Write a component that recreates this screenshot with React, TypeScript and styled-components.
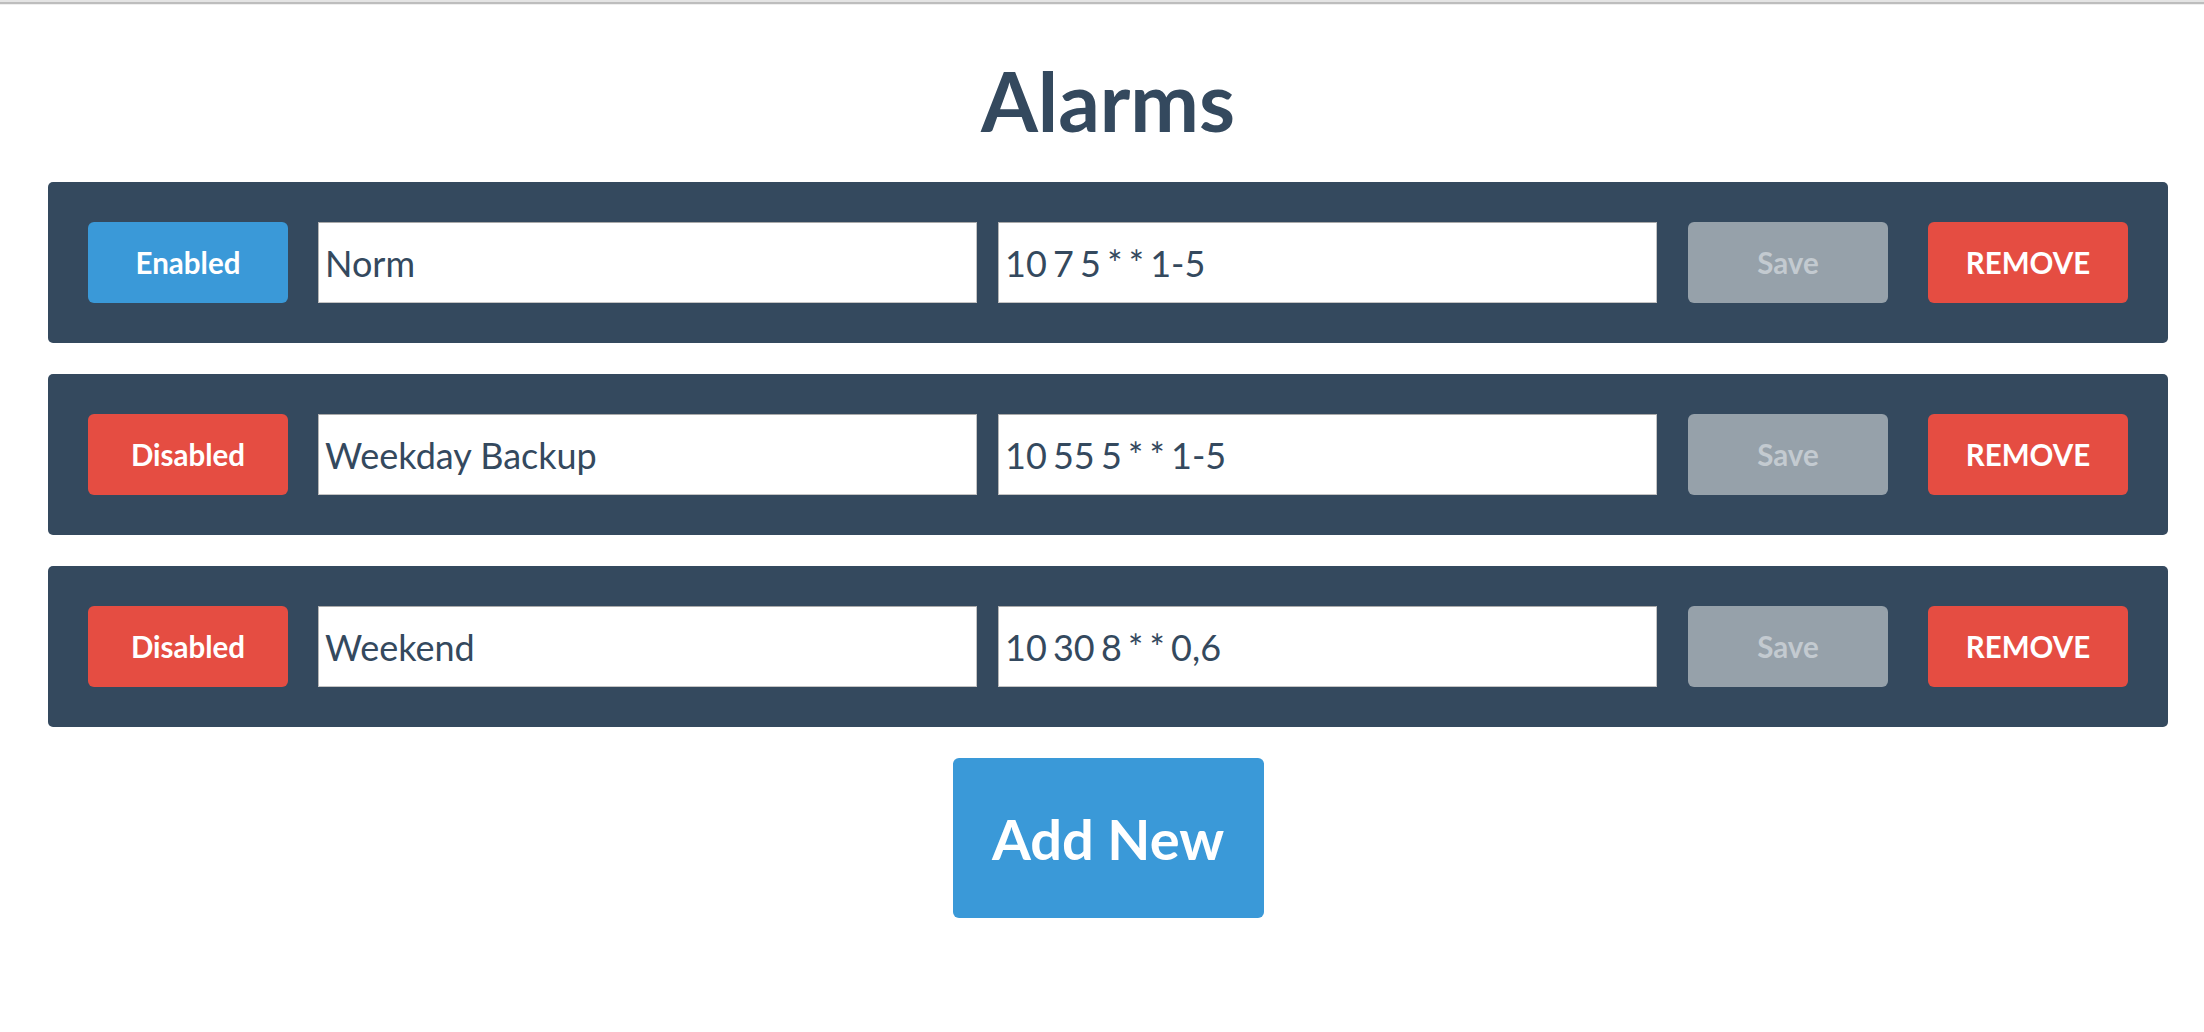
import React from 'react';
import styled, { createGlobalStyle } from 'styled-components';

const GlobalStyle = createGlobalStyle`
  html, body { margin: 0; padding: 0; background: #ffffff; }
  body { font-family: Lato, "Open Sans", "Liberation Sans", sans-serif; }
  * { box-sizing: border-box; }
`;

const TopEdge = styled.div`
  height: 5px;
  background: #bdbdbd;
  border-top: 2px solid #e4e4e4;
  border-bottom: 1px solid #efefef;
`;

const Main = styled.main`
  display: flex;
  flex-direction: column;
  padding: 0 36px 40px 48px;
`;

const Title = styled.h1`
  margin: 54px 0 41px;
  font-family: Lato, "Open Sans", sans-serif;
  font-weight: 700;
  font-size: 82px;
  line-height: 1;
  text-align: center;
  color: #34495e;
`;

const AlarmList = styled.div`
  display: flex;
  flex-direction: column;
  gap: 31px;
`;

const Panel = styled.div`
  display: flex;
  align-items: center;
  background: #34495e;
  border-radius: 5px;
  padding: 40px;
`;

const ActionButton = styled.button<{ $tone: 'blue' | 'red' | 'gray'; $gap?: number }>`
  flex: 0 0 200px;
  height: 81px;
  margin-left: ${(p) => p.$gap ?? 0}px;
  border: none;
  border-radius: 6px;
  font-family: Lato, "Open Sans", sans-serif;
  font-weight: 700;
  font-size: 29.5px;
  cursor: pointer;
  background: ${(p) => (p.$tone === 'blue' ? '#3a99d8' : p.$tone === 'red' ? '#e54d42' : '#96a1aa')};
  color: ${(p) => (p.$tone === 'gray' ? '#c3cad0' : '#ffffff')};
`;

const Field = styled.input<{ $gap: number; $tight?: boolean }>`
  flex: 1 1 0;
  min-width: 0;
  height: 81px;
  margin-left: ${(p) => p.$gap}px;
  padding: 0 6px;
  border: 1px solid #c4c4c4;
  border-top-color: #a9a9a9;
  border-left-color: #b5b5b5;
  border-radius: 0;
  background: #ffffff;
  font-family: Lato, "Open Sans", sans-serif;
  font-size: 36px;
  word-spacing: ${(p) => (p.$tight ? '-3px' : '0')};
  color: #34495e;
  outline: none;
`;

const AddButton = styled.button`
  align-self: center;
  width: 311px;
  height: 160px;
  margin-top: 31px;
  border: none;
  border-radius: 6px;
  background: #3a99d8;
  color: #ffffff;
  font-family: Lato, "Open Sans", sans-serif;
  font-weight: 700;
  font-size: 56px;
  cursor: pointer;
`;

type Alarm = { enabled: boolean; name: string; cron: string };

const alarms: Alarm[] = [
  { enabled: true, name: 'Norm', cron: '10 7 5 * * 1-5' },
  { enabled: false, name: 'Weekday Backup', cron: '10 55 5 * * 1-5' },
  { enabled: false, name: 'Weekend', cron: '10 30 8 * * 0,6' },
];

export default function App() {
  return (
    <>
      <GlobalStyle />
      <TopEdge />
      <Main>
        <Title>Alarms</Title>
        <AlarmList>
          {alarms.map((a) => (
            <Panel key={a.name}>
              <ActionButton $tone={a.enabled ? 'blue' : 'red'}>
                {a.enabled ? 'Enabled' : 'Disabled'}
              </ActionButton>
              <Field $gap={30} defaultValue={a.name} />
              <Field $gap={21} $tight defaultValue={a.cron} />
              <ActionButton $tone="gray" $gap={31}>Save</ActionButton>
              <ActionButton $tone="red" $gap={40}>REMOVE</ActionButton>
            </Panel>
          ))}
        </AlarmList>
        <AddButton>Add New</AddButton>
      </Main>
    </>
  );
}
